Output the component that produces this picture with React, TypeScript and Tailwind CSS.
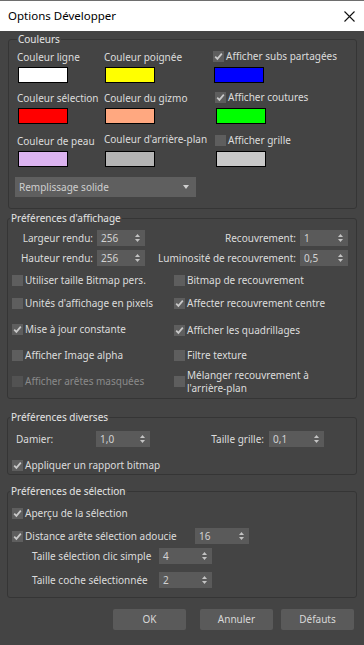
import type { ReactNode } from "react";

type SpinProps = { value: string; className: string };

function Arrows() {
  return (
    <svg width="5" height="8" viewBox="0 0 5 8" aria-hidden="true">
      <path d="M0 3 L2.5 0 L5 3 Z" fill="#c4c4c4" />
      <path d="M0 5 L2.5 8 L5 5 Z" fill="#c4c4c4" />
    </svg>
  );
}

function Spin({ value, className }: SpinProps) {
  return (
    <div className={`flex h-[16px] shrink-0 items-center justify-between bg-[#5a5a5a] pl-[4px] pr-[5px] text-[#d2d2d2] ${className}`}>
      <span>{value}</span>
      <Arrows />
    </div>
  );
}

function Box({ checked, disabled }: { checked?: boolean; disabled?: boolean }) {
  return (
    <span className={`flex h-[11px] w-[11px] shrink-0 items-center justify-center ${disabled ? "bg-[#525252]" : "bg-[#5e5e5e]"}`}>
      {checked && (
        <svg width="9" height="9" viewBox="0 0 9 9" aria-hidden="true">
          <path d="M1.2 4.6 L3.4 6.9 L7.8 1.6" fill="none" stroke="#c9c9c9" strokeWidth="1.7" />
        </svg>
      )}
    </span>
  );
}

function Check({ children, checked, disabled }: { children: ReactNode; checked?: boolean; disabled?: boolean }) {
  return (
    <div className={`flex items-center gap-[2px] ${disabled ? "text-[#8a8a8a]" : ""}`}>
      <Box checked={checked} disabled={disabled} />
      <span className="leading-[13px]">{children}</span>
    </div>
  );
}

function Swatch({ color }: { color: string }) {
  return <div className={`mt-[3px] ml-[1px] h-[16px] w-[50px] border border-black ${color}`} />;
}

function Group({ title, children, className }: { title: string; children: ReactNode; className: string }) {
  return (
    <fieldset className={`rounded-[3px] border border-[#353535] ${className}`}>
      <legend className="ml-[2px] px-[1px] leading-[14px] text-[#e4e4e4]">{title}</legend>
      {children}
    </fieldset>
  );
}

export default function App() {
  return (
    <div className="flex h-[645px] w-[364px] flex-col overflow-hidden border-t border-[#6e6e6e] bg-[#444444] font-['Noto_Sans',sans-serif] text-[10px] text-[#dcdcdc]">
      <div className="flex h-[30px] shrink-0 items-center justify-between bg-white pl-[8px] pr-[9px] text-[11.5px] text-black">
        <span>Options Développer</span>
        <svg width="11" height="11" viewBox="0 0 11 11" aria-hidden="true">
          <path d="M0.5 0.5 L10.5 10.5 M10.5 0.5 L0.5 10.5" stroke="#111" strokeWidth="1.1" />
        </svg>
      </div>

      <div className="flex flex-col px-[7px]">
        <Group title="Couleurs" className="mt-[1px] ml-[1px] pb-[11px] pl-[6px]">
          <div className="mt-[4px] ml-[2px] grid grid-cols-[87px_109px_1fr] gap-y-[8px]">
            <div className="flex flex-col">
              <span className="h-[14px] leading-[14px]">Couleur ligne</span>
              <Swatch color="bg-white" />
            </div>
            <div className="flex flex-col">
              <span className="h-[14px] leading-[14px]">Couleur poignée</span>
              <Swatch color="bg-[#ffff00]" />
            </div>
            <div className="flex flex-col">
              <div className="h-[14px]">
                <Check checked>Afficher subs partagées</Check>
              </div>
              <Swatch color="bg-[#0000ff]" />
            </div>

            <div className="flex flex-col">
              <span className="h-[14px] leading-[14px]">Couleur sélection</span>
              <Swatch color="bg-[#ff0000]" />
            </div>
            <div className="flex flex-col">
              <span className="h-[14px] leading-[14px]">Couleur du gizmo</span>
              <Swatch color="bg-[#ffa880]" />
            </div>
            <div className="flex flex-col pl-[2px]">
              <div className="h-[14px]">
                <Check checked>Afficher coutures</Check>
              </div>
              <Swatch color="bg-[#00ff00]" />
            </div>

            <div className="mt-[2px] flex flex-col">
              <span className="h-[14px] leading-[14px]">Couleur de peau</span>
              <Swatch color="bg-[#dcb4f0]" />
            </div>
            <div className="mt-[2px] flex flex-col">
              <span className="-mt-[2px] h-[14px] leading-[14px]">Couleur d'arrière-plan</span>
              <div className="mt-[5px] ml-[1px] h-[16px] w-[50px] border border-black bg-[#b4b4b4]" />
            </div>
            <div className="mt-[2px] flex flex-col pl-[2px]">
              <div className="h-[14px]">
                <Check>Afficher grille</Check>
              </div>
              <Swatch color="bg-[#c8c8c8]" />
            </div>
          </div>
          <div className="mt-[10px] flex h-[20px] w-[181px] items-center justify-between bg-[#5f5f5f] pl-[4px] pr-[7px] text-[#cfcfcf]">
            <span>Remplissage solide</span>
            <svg width="6" height="4" viewBox="0 0 6 4" aria-hidden="true">
              <path d="M0 0 L6 0 L3 4 Z" fill="#cfcfcf" />
            </svg>
          </div>
        </Group>

        <Group title="Préférences d'affichage" className="mt-[2px] pr-[8px]">
          <div className="mt-[5px] flex flex-col gap-[4px]">
            <div className="flex h-[16px] items-center">
              <span className="w-[85px] text-right">Largeur rendu:</span>
              <Spin value="256" className="ml-[4px] w-[48px]" />
              <span className="flex-1 text-right">Recouvrement:</span>
              <Spin value="1" className="ml-[4px] w-[48px]" />
            </div>
            <div className="flex h-[16px] items-center">
              <span className="w-[85px] text-right">Hauteur rendu:</span>
              <Spin value="256" className="ml-[4px] w-[48px]" />
              <span className="flex-1 text-right">Luminosité de recouvrement:</span>
              <Spin value="0,5" className="ml-[4px] w-[48px]" />
            </div>
          </div>
          <div className="mt-[3px] grid grid-cols-[162px_1fr] grid-rows-[22px_24px_30px_20px_33px] items-center pl-[4px]">
            <Check>Utiliser taille Bitmap pers.</Check>
            <Check>Bitmap de recouvrement</Check>
            <Check>Unités d'affichage en pixels</Check>
            <Check checked>Affecter recouvrement centre</Check>
            <div className="-mt-[2px]">
              <Check checked>Mise à jour constante</Check>
            </div>
            <Check checked>Afficher les quadrillages</Check>
            <Check>Afficher Image alpha</Check>
            <Check>Filtre texture</Check>
            <Check disabled>Afficher arêtes masquées</Check>
            <Check>
              Mélanger recouvrement à
              <br />
              l'arrière-plan
            </Check>
          </div>
        </Group>

        <Group title="Préférences diverses" className="mt-[11px] pb-[2px]">
          <div className="mt-[7px] flex h-[16px] items-center pl-[8px]">
            <span className="w-[80px]">Damier:</span>
            <Spin value="1,0" className="w-[54px]" />
            <span className="w-[119px] whitespace-nowrap pr-[5px] text-right">Taille grille:</span>
            <Spin value="0,1" className="w-[55px]" />
          </div>
          <div className="mt-[12px] pl-[4px]">
            <Check checked>Appliquer un rapport bitmap</Check>
          </div>
        </Group>

        <Group title="Préférences de sélection" className="mt-[9px] pb-[9px]">
          <div className="mt-[9px] pl-[4px]">
            <Check checked>Aperçu de la sélection</Check>
          </div>
          <div className="mt-[8px] flex h-[16px] items-center pl-[4px]">
            <div className="w-[183px]">
              <Check checked>Distance arête sélection adoucie</Check>
            </div>
            <Spin value="16" className="w-[54px]" />
          </div>
          <div className="mt-[4px] flex h-[16px] items-center pl-[24px]">
            <span className="w-[127px]">Taille sélection clic simple</span>
            <Spin value="4" className="w-[53px]" />
          </div>
          <div className="mt-[8px] flex h-[16px] items-center pl-[24px]">
            <span className="w-[127px]">Taille coche sélectionnée</span>
            <Spin value="2" className="w-[53px]" />
          </div>
        </Group>

        <div className="mt-[11px] flex justify-end pr-[3px] text-[#d8d8d8]">
          <button className="flex h-[21px] w-[73px] items-center justify-center rounded-[2px] bg-[#5a5a5a]">OK</button>
          <button className="ml-[14px] flex h-[21px] w-[73px] items-center justify-center rounded-[2px] bg-[#5a5a5a]">Annuler</button>
          <button className="ml-[8px] flex h-[21px] w-[73px] items-center justify-center rounded-[2px] bg-[#5a5a5a]">Défauts</button>
        </div>
      </div>
    </div>
  );
}
